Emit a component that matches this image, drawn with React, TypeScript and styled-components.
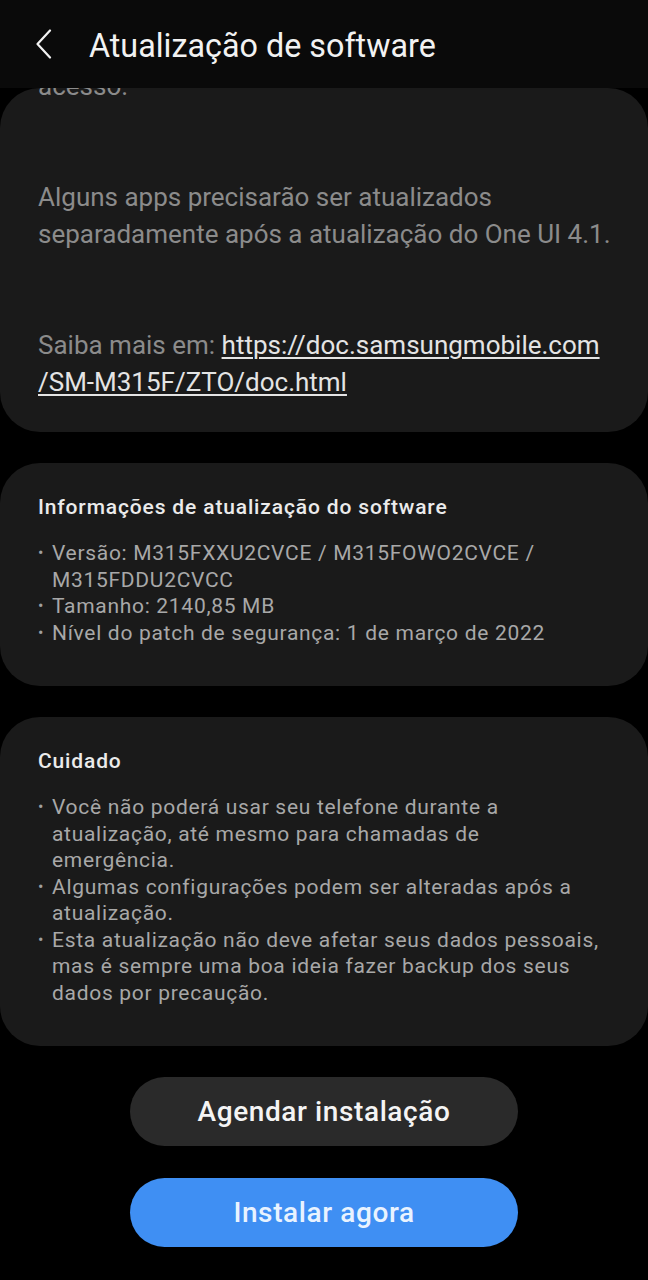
import React, { FC } from 'react';
import styled, { createGlobalStyle } from 'styled-components';

const GlobalStyle = createGlobalStyle`
  html, body {
    margin: 0;
    padding: 0;
    background: #000;
  }
  body {
    font-family: Roboto, 'Noto Sans', 'Liberation Sans', sans-serif;
    -webkit-font-smoothing: antialiased;
  }
`;

const Screen = styled.div`
  width: 648px;
  height: 1280px;
  display: flex;
  flex-direction: column;
  background: #000;
  overflow: hidden;
`;

const Header = styled.header`
  height: 88px;
  flex-shrink: 0;
  background: #0a0a0a;
  display: flex;
  align-items: center;
  padding: 4px 0 0 30px;
  box-sizing: border-box;
`;

const BackButton = styled.button`
  width: 28px;
  height: 36px;
  padding: 0;
  border: none;
  background: transparent;
  display: flex;
  align-items: center;
  justify-content: center;
  margin: -4px 31px 0 0;
`;

const Title = styled.h1`
  margin: 0;
  font-size: 32.3px;
  font-weight: 400;
  color: #f2f2f2;
`;

const Scroller = styled.main`
  flex: 1;
  display: flex;
  flex-direction: column;
  gap: 31px;
  border-radius: 40px 40px 0 0;
  overflow: hidden;
`;

const Card = styled.section<{ $lift?: number }>`
  background: #1a1a1a;
  border-radius: 40px;
  padding: 31px 38px 40px;
  margin-top: ${p => (p.$lift ? `-${p.$lift}px` : '0')};
`;

const LongCard = styled(Card)`
  padding: 0 38px 31px;
`;

const Para = styled.p`
  margin: 0 0 74px;
  font-size: 26px;
  line-height: 37px;
  color: #8b8b8b;
  white-space: nowrap;
  &:last-child {
    margin-bottom: 0;
  }
`;

const Link = styled.a`
  color: #e4e4e4;
  text-decoration: underline;
  text-decoration-thickness: 1.5px;
  text-underline-offset: 3px;
`;

const CardTitle = styled.h2`
  margin: 0 0 20px;
  font-size: 21px;
  font-weight: 500;
  letter-spacing: 0.85px;
  line-height: 26px;
  color: #ebebeb;
`;

const List = styled.ul`
  margin: 0;
  padding: 0;
  list-style: none;
`;

const Item = styled.li`
  display: flex;
  font-size: 21px;
  letter-spacing: 0.7px;
  line-height: 26.5px;
  color: #a8a8a8;
  white-space: nowrap;
  &::before {
    content: '•';
    width: 14px;
    flex-shrink: 0;
    font-size: 16px;
    letter-spacing: 0;
    color: #a0a0a0;
  }
`;

const Actions = styled.div`
  display: flex;
  flex-direction: column;
  align-items: center;
  gap: 32px;
`;

const ActionButton = styled.button<{ $primary?: boolean }>`
  width: 388px;
  height: 69px;
  border: none;
  border-radius: 35px;
  font-family: inherit;
  font-size: 28px;
  font-weight: 500;
  letter-spacing: 0.6px;
  background: ${p => (p.$primary ? '#3f8ff3' : '#2a2a2a')};
  color: ${p => (p.$primary ? '#e9f3ff' : '#f4f4f4')};
`;

const Chevron: FC = () => (
  <svg width="18" height="30" viewBox="0 0 18 30" fill="none">
    <path d="M15 1.5 L2.5 15 L15 28.5" stroke="#f2f2f2" strokeWidth="2.2" strokeLinecap="round" strokeLinejoin="round" />
  </svg>
);

const App: FC = () => (
  <Screen>
    <GlobalStyle />
    <Header>
      <BackButton type="button" aria-label="Voltar">
        <Chevron />
      </BackButton>
      <Title>Atualização de software</Title>
    </Header>
    <Scroller>
      <LongCard $lift={20}>
        <Para>acesso.</Para>
        <Para>
          Alguns apps precisarão ser atualizados
          <br />
          separadamente após a atualização do One UI 4.1.
        </Para>
        <Para>
          Saiba mais em: <Link href="#">https://doc.samsungmobile.com</Link>
          <br />
          <Link href="#">/SM-M315F/ZTO/doc.html</Link>
        </Para>
      </LongCard>

      <Card>
        <CardTitle>Informações de atualização do software</CardTitle>
        <List>
          <Item>
            <span>
              Versão: M315FXXU2CVCE / M315FOWO2CVCE /
              <br />
              M315FDDU2CVCC
            </span>
          </Item>
          <Item>Tamanho: 2140,85 MB</Item>
          <Item>Nível do patch de segurança: 1 de março de 2022</Item>
        </List>
      </Card>

      <Card>
        <CardTitle>Cuidado</CardTitle>
        <List>
          <Item>
            <span>
              Você não poderá usar seu telefone durante a
              <br />
              atualização, até mesmo para chamadas de
              <br />
              emergência.
            </span>
          </Item>
          <Item>
            <span>
              Algumas configurações podem ser alteradas após a
              <br />
              atualização.
            </span>
          </Item>
          <Item>
            <span>
              Esta atualização não deve afetar seus dados pessoais,
              <br />
              mas é sempre uma boa ideia fazer backup dos seus
              <br />
              dados por precaução.
            </span>
          </Item>
        </List>
      </Card>

      <Actions>
        <ActionButton type="button">Agendar instalação</ActionButton>
        <ActionButton type="button" $primary>
          Instalar agora
        </ActionButton>
      </Actions>
    </Scroller>
  </Screen>
);

export default App;
